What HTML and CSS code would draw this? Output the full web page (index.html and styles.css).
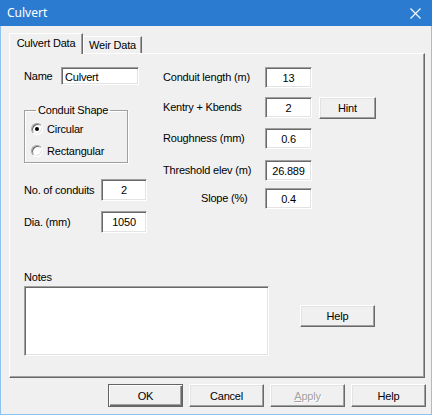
FILE: index.html
```html
<!DOCTYPE html>
<html>
<head>
<meta charset="utf-8">
<title>Culvert</title>
<link rel="stylesheet" href="styles.css">
</head>
<body>
<div class="win">
  <div class="titlebar">
    <span class="title">Culvert</span>
    <svg class="close" width="11" height="11" viewBox="0 0 11 11"><path d="M0.5 0.5 L10.5 10.5 M10.5 0.5 L0.5 10.5" stroke="#fff" stroke-width="1.1" fill="none"/></svg>
  </div>
  <div class="client">
    <div class="tabs">
      <div class="tab active">Culvert Data</div>
      <div class="tab">Weir Data</div>
    </div>
    <div class="panel">
      <div class="top">
        <div class="left">
          <div class="row name-row"><span class="lbl name-lbl">Name</span><input class="tb name" value="Culvert"></div>
          <fieldset class="group">
            <legend>Conduit Shape</legend>
            <div class="radio"><span class="rb checked"></span>Circular</div>
            <div class="radio"><span class="rb"></span>Rectangular</div>
          </fieldset>
          <div class="row lrow first"><span class="lbl lcol">No. of conduits</span><input class="tb num" value="2"></div>
          <div class="row lrow"><span class="lbl lcol">Dia. (mm)</span><input class="tb num" value="1050"></div>
        </div>
        <div class="right">
          <div class="row rrow"><span class="lbl rcol">Conduit length (m)</span><input class="tb num" value="13"></div>
          <div class="row rrow r2"><span class="lbl rcol">Kentry + Kbends</span><input class="tb num" value="2"><button class="btn hint">Hint</button></div>
          <div class="row rrow r3"><span class="lbl rcol">Roughness (mm)</span><input class="tb num" value="0.6"></div>
          <div class="row rrow r4"><span class="lbl rcol">Threshold elev (m)</span><input class="tb num" value="26.889"></div>
          <div class="row rrow r5"><span class="lbl rcol slope">Slope (%)</span><input class="tb num" value="0.4"></div>
        </div>
      </div>
      <div class="notes-area">
        <div class="notes">
          <div class="notes-lbl">Notes</div>
          <textarea class="tb notes-box"></textarea>
        </div>
        <button class="btn help-in">Help</button>
      </div>
    </div>
    <div class="buttons">
      <button class="btn default">OK</button>
      <button class="btn">Cancel</button>
      <button class="btn disabled"><u>A</u>pply</button>
      <button class="btn">Help</button>
    </div>
  </div>
</div>
</body>
</html>
```
FILE: styles.css
```css
* { box-sizing: border-box; }
html, body { margin: 0; padding: 0; background: #ffffff; }
body {
  font-family: "Liberation Sans", Arial, sans-serif;
  font-size: 11px;
  line-height: 13px;
  letter-spacing: -0.2px;
  color: #000;
}
.win {
  width: 432px;
  height: 415px;
  display: flex;
  flex-direction: column;
}
.titlebar {
  flex: none;
  height: 26px;
  background: #2b7cd0;
  display: flex;
  align-items: center;
  justify-content: space-between;
  padding: 0 11px 0 7px;
}
.title {
  color: #fff;
  font-family: "Noto Sans", "Open Sans", sans-serif;
  font-size: 12px;
  line-height: 16px;
  letter-spacing: 0;
}
.close { display: block; }
.client {
  flex: 1;
  background: #f0f0f0;
  border: 1px solid #8ec2f0;
  border-top: none;
  padding: 7px 5px 0 8px;
}
.tabs {
  display: flex;
  align-items: flex-end;
  height: 20px;
}
.tab {
  height: 17px;
  width: 59px;
  background: #f0f0f0;
  border-top: 1px solid #fff;
  border-left: 1px solid #fff;
  border-right: 1px solid #696969;
  box-shadow: inset -1px 0 #a0a0a0;
  display: flex;
  align-items: center;
  justify-content: center;
  padding-top: 1px;
}
.tab.active {
  width: 74px;
  height: 21px;
  margin-bottom: -1px;
  position: relative;
  z-index: 1;
  padding-top: 0;
  padding-bottom: 2px;
}
.panel {
  width: 416px;
  height: 325px;
  border: 1px solid;
  border-color: #fff #696969 #696969 #fff;
  box-shadow: inset -1px -1px #a0a0a0;
  padding: 13px 0 0 14px;
}
.top { display: flex; }
.left { width: 139px; }
.row { display: flex; align-items: center; }
.tb {
  font-family: inherit;
  font-size: 11px;
  letter-spacing: -0.2px;
  color: #000;
  background: #fff;
  border: 1px solid;
  border-color: #a0a0a0 #fff #fff #a0a0a0;
  box-shadow: inset 1px 1px #696969, inset -1px -1px #e3e3e3;
  margin: 0;
  padding: 0 3px;
  outline: none;
}
.num { text-align: center; width: 47px; height: 21px; }
.name-row { height: 18px; }
.name-lbl { width: 37px; }
.name { width: 78px; height: 18px; padding-top: 1px; }
.group {
  margin: 19px 0 0 0;
  width: 104px;
  height: 59px;
  border: 1px solid #a0a0a0;
  box-shadow: 1px 1px #fff, inset 1px 1px #fff;
  padding: 5px 0 0 6px;
}
.group legend {
  padding: 0 2px;
  margin-left: 5px;
  line-height: 13px;
}
.radio {
  display: flex;
  align-items: center;
  height: 14px;
  margin-bottom: 8px;
}
.rb {
  width: 12px;
  height: 12px;
  border-radius: 50%;
  border: 1px solid;
  border-color: #a0a0a0 #fff #fff #a0a0a0;
  box-shadow: inset 1px 1px #696969, inset -1px -1px #e3e3e3;
  background: #fff;
  margin-right: 4px;
  display: flex;
  align-items: center;
  justify-content: center;
}
.rb.checked::after {
  content: "";
  width: 4px;
  height: 4px;
  border-radius: 50%;
  background: #000;
}
.lrow { height: 22px; margin-top: 10px; }
.lrow.first { margin-top: 16px; }
.lrow .num { width: 46px; height: 22px; }
.lcol { width: 77px; }
.right { flex: 1; display: flex; flex-direction: column; }
.rrow { height: 21px; }
.r2 { margin-top: 9px; }
.r3 { margin-top: 10px; }
.r4 { margin-top: 11px; }
.r5 { margin-top: 7px; }
.rcol { width: 102px; }
.slope { padding-left: 38px; }
.btn {
  font-family: inherit;
  font-size: 11px;
  letter-spacing: -0.2px;
  color: #000;
  background: #f0f0f0;
  border: 1px solid;
  border-color: #fff #696969 #696969 #fff;
  box-shadow: inset -1px -1px #a0a0a0, inset 1px 1px #e3e3e3;
  width: 75px;
  height: 23px;
  padding: 0;
  margin: 0;
}
.hint { width: 57px; height: 22px; margin-left: 7px; align-self: flex-start; }
.notes-area { display: flex; margin-top: 38px; }
.notes { width: 245px; }
.notes-lbl { height: 13px; margin-bottom: 2px; }
.notes-box { display: block; width: 245px; height: 70px; resize: none; }
.help-in { height: 22px; margin: 34px 0 0 31px; }
.buttons {
  display: flex;
  justify-content: flex-end;
  gap: 6px;
  margin-top: 6px;
}
.btn.default {
  border: 1px solid #646464;
  box-shadow: inset 1px 1px #fff, inset -1px -1px #696969, inset -2px -2px #a0a0a0;
}
.btn.disabled { color: #a0a0a0; text-shadow: 1px 1px #fff; }
.btn.disabled u { text-decoration-color: #a0a0a0; }
```
